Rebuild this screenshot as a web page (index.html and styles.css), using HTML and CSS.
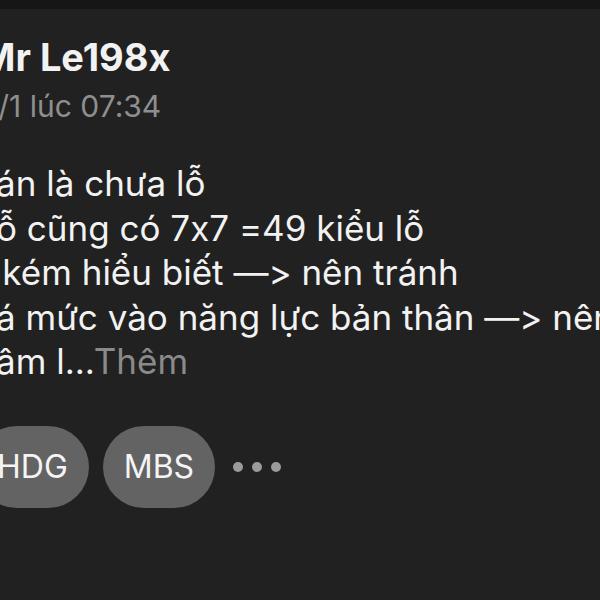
FILE: index.html
```html
<!DOCTYPE html>
<html lang="vi">
  <head>
    <meta charset="utf-8">
    <title>Bài viết</title>
    <link rel="stylesheet" href="styles.css">
  </head>
  <body>
    <div class="status-bar"></div>
    <div class="post">
      <div class="post-header">
        <div class="author">Mr Le198x</div>
        <div class="date">2/1 lúc 07:34</div>
      </div>
      <div class="post-body">
        <div class="line">án là chưa lỗ</div>
        <div class="line">ỗ cũng có 7x7 =49 kiểu lỗ</div>
        <div class="line">&thinsp;kém hiểu biết —&gt; nên tránh</div>
        <div class="line">á mức vào năng lực bản thân —&gt; nên tránh</div>
        <div class="line">âm l...<span class="more">Thêm</span></div>
      </div>
      <div class="tags">
        <span class="tag">HDG</span>
        <span class="tag">MBS</span>
        <span class="dots"><i></i><i></i><i></i></span>
      </div>
    </div>
  </body>
</html>
```

FILE: styles.css
```css
html, body {
  margin: 0;
  padding: 0;
  width: 600px;
  height: 600px;
  overflow: hidden;
  background-color: #212121;
  font-family: Inter, "Noto Sans", sans-serif;
  font-feature-settings: "calt" 0, "liga" 0;
  color: #f2f2f2;
}

.status-bar {
  height: 9px;
  background-color: #161616;
}

.post {
  display: flex;
  flex-direction: column;
}

.post-header {
  margin-left: -20px;
  padding-top: 26px;
}

.author {
  font-size: 38px;
  font-weight: 700;
  line-height: 44px;
}

.date {
  margin-top: 9px;
  font-size: 30px;
  line-height: 36px;
  color: #8f8f8f;
}

.post-body {
  margin-top: 37px;
  margin-left: -4px;
  font-size: 35px;
  line-height: 44.5px;
}

.line {
  white-space: nowrap;
}

.more {
  color: #8a8a8a;
}

.tags {
  display: flex;
  align-items: center;
  gap: 14px;
  margin-top: 42px;
  margin-left: -24px;
}

.tag {
  display: inline-flex;
  align-items: center;
  height: 82px;
  padding: 0 21px;
  border-radius: 41px;
  background-color: #636363;
  font-size: 32px;
  color: #f4f4f4;
}

.dots {
  display: flex;
  gap: 9px;
  margin-left: 4px;
}

.dots i {
  width: 10px;
  height: 10px;
  border-radius: 50%;
  background-color: #9b9b9b;
}
```
